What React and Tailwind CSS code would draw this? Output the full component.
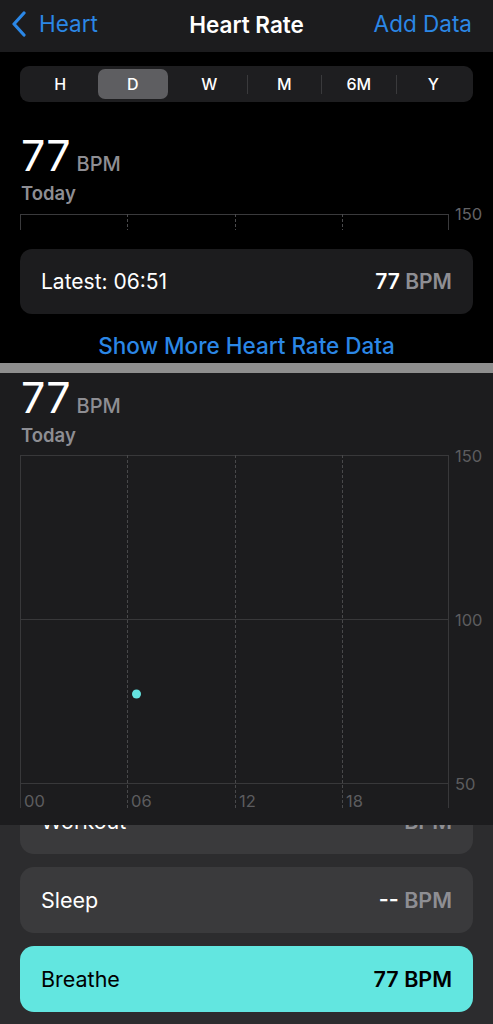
import React from 'react';

const segments = ['H', 'D', 'W', 'M', '6M', 'Y'];

const Chevron = () => (
  <svg width="16" height="26" viewBox="0 0 16 26" fill="none">
    <path d="M13 2 L3 13 L13 24" stroke="#2b87e6" strokeWidth="3.2" strokeLinecap="round" strokeLinejoin="round" />
  </svg>
);

const Row = ({ label, value, unit, tone = 'dark' }) => {
  const cyan = tone === 'cyan';
  return (
    <div
      className={`flex h-[66px] items-center justify-between rounded-[14px] px-[21px] ${
        cyan ? 'bg-[#62e6e0] text-black' : 'bg-[#3a3a3c] text-white'
      }`}
    >
      <span className="text-[21.5px]">{label}</span>
      <span className="text-[21.5px] font-semibold">
        {value} <span className={cyan ? 'text-black' : 'text-[#8e8e93]'}>{unit}</span>
      </span>
    </div>
  );
};

const App = () => {
  return (
    <main className="flex min-h-screen flex-col bg-[#2c2c2e] font-['Inter','Noto_Sans',sans-serif] text-white">
      {/* Top: Heart Rate screen */}
      <section className="bg-black">
        <header className="relative flex h-[52px] items-center justify-between bg-[#1c1c1e] pb-[4px] pl-[11px] pr-[21px]">
          <div className="flex items-center gap-[12px] text-[22.5px] text-[#2b87e6]">
            <Chevron />
            <span>Heart</span>
          </div>
          <h1 className="absolute left-1/2 top-[8px] -translate-x-1/2 text-[22.5px] font-semibold">Heart Rate</h1>
          <span className="text-[22.5px] text-[#2b87e6]">Add Data</span>
        </header>

        <div className="mx-[20px] mt-[14px] flex h-[36px] items-center rounded-[9px] bg-[#1e1e20] p-[3px]">
          {segments.map((s, i) => (
            <div key={s} className="flex h-full flex-1 items-center">
              {i > 2 && <div className="h-[19px] w-px bg-[#3a3a3c]" />}
              <div
                className={`flex h-full flex-1 items-center justify-center rounded-[7px] text-[16px] font-medium ${
                  s === 'D' ? 'mr-[4px] bg-[#5e5e61]' : ''
                }`}
              >
                {s}
              </div>
            </div>
          ))}
        </div>

        <div className="mt-[32px] px-[21px]">
          <div className="flex items-baseline gap-[6px] leading-none">
            <span className="text-[43px]">77</span>
            <span className="text-[20px] font-medium text-[#8e8e93]">BPM</span>
          </div>
          <div className="mt-[5px] text-[18.5px] font-semibold leading-[22px] text-[#8e8e93]">Today</div>
        </div>

        <svg className="block" width="493" height="26" fontFamily="Inter, sans-serif">
          <line x1="20" y1="10.5" x2="449" y2="10.5" stroke="#3a3a3c" />
          <line x1="20.5" y1="10" x2="20.5" y2="26" stroke="#3a3a3c" />
          <line x1="448.5" y1="10" x2="448.5" y2="26" stroke="#3a3a3c" />
          {[127.5, 235.5, 342.5].map((x) => (
            <line key={x} x1={x} y1="10" x2={x} y2="26" stroke="#4a4a4c" strokeDasharray="3 2" />
          ))}
          <text x="455" y="16" fill="#636366" fontSize="16.5">
            150
          </text>
        </svg>

        <div className="mx-[20px] mt-[19px] flex h-[65px] items-center justify-between rounded-[12px] bg-[#1c1c1e] px-[21px]">
          <span className="text-[21px]">Latest: 06:51</span>
          <span className="text-[21px] font-semibold">
            77 <span className="text-[#8e8e93]">BPM</span>
          </span>
        </div>

        <div className="mt-[19px] text-center text-[22.5px] font-medium leading-[26px] text-[#2b87e6]">
          Show More Heart Rate Data
        </div>
        <div className="mt-[4px] h-[10px] bg-[#8e8e8e]" />
      </section>

      {/* Chart panel overlapping the list */}
      <section className="relative z-10 bg-[#1c1c1e] pb-[13px] pt-[3px]">
        <div className="px-[21px]">
          <div className="flex items-baseline gap-[6px] leading-none">
            <span className="text-[43px]">77</span>
            <span className="text-[20px] font-medium text-[#8e8e93]">BPM</span>
          </div>
          <div className="mt-[5px] text-[18.5px] font-semibold leading-[22px] text-[#8e8e93]">Today</div>
        </div>

        <svg className="block" width="493" height="366" fontFamily="Inter, sans-serif">
          <line x1="20" y1="9.5" x2="449" y2="9.5" stroke="#38383a" />
          <line x1="20" y1="173.5" x2="449" y2="173.5" stroke="#38383a" />
          <line x1="20" y1="337.5" x2="449" y2="337.5" stroke="#38383a" />
          <line x1="20.5" y1="9" x2="20.5" y2="362" stroke="#38383a" />
          <line x1="448.5" y1="9" x2="448.5" y2="362" stroke="#38383a" />
          {[127.5, 235.5, 342.5].map((x) => (
            <line key={x} x1={x} y1="9" x2={x} y2="362" stroke="#48484a" strokeDasharray="3 2" />
          ))}
          {[
            ['150', 16],
            ['100', 180],
            ['50', 344],
          ].map(([t, y]) => (
            <text key={t} x="455" y={y} fill="#5c5c5f" fontSize="16.5">
              {t}
            </text>
          ))}
          {[
            ['00', 24],
            ['06', 131],
            ['12', 239],
            ['18', 346],
          ].map(([t, x]) => (
            <text key={t} x={x} y="361" fill="#5c5c5f" fontSize="16.5">
              {t}
            </text>
          ))}
          <circle cx="136.5" cy="248" r="4.5" fill="#64e3e0" />
        </svg>
      </section>

      {/* Source list */}
      <section className="-mt-[37px] flex flex-1 flex-col gap-[13px] px-[20px] pb-[12px]">
        <Row label="Workout" value="--" unit="BPM" />
        <Row label="Sleep" value="--" unit="BPM" />
        <Row label="Breathe" value="77" unit="BPM" tone="cyan" />
      </section>
    </main>
  );
};

export default App;
